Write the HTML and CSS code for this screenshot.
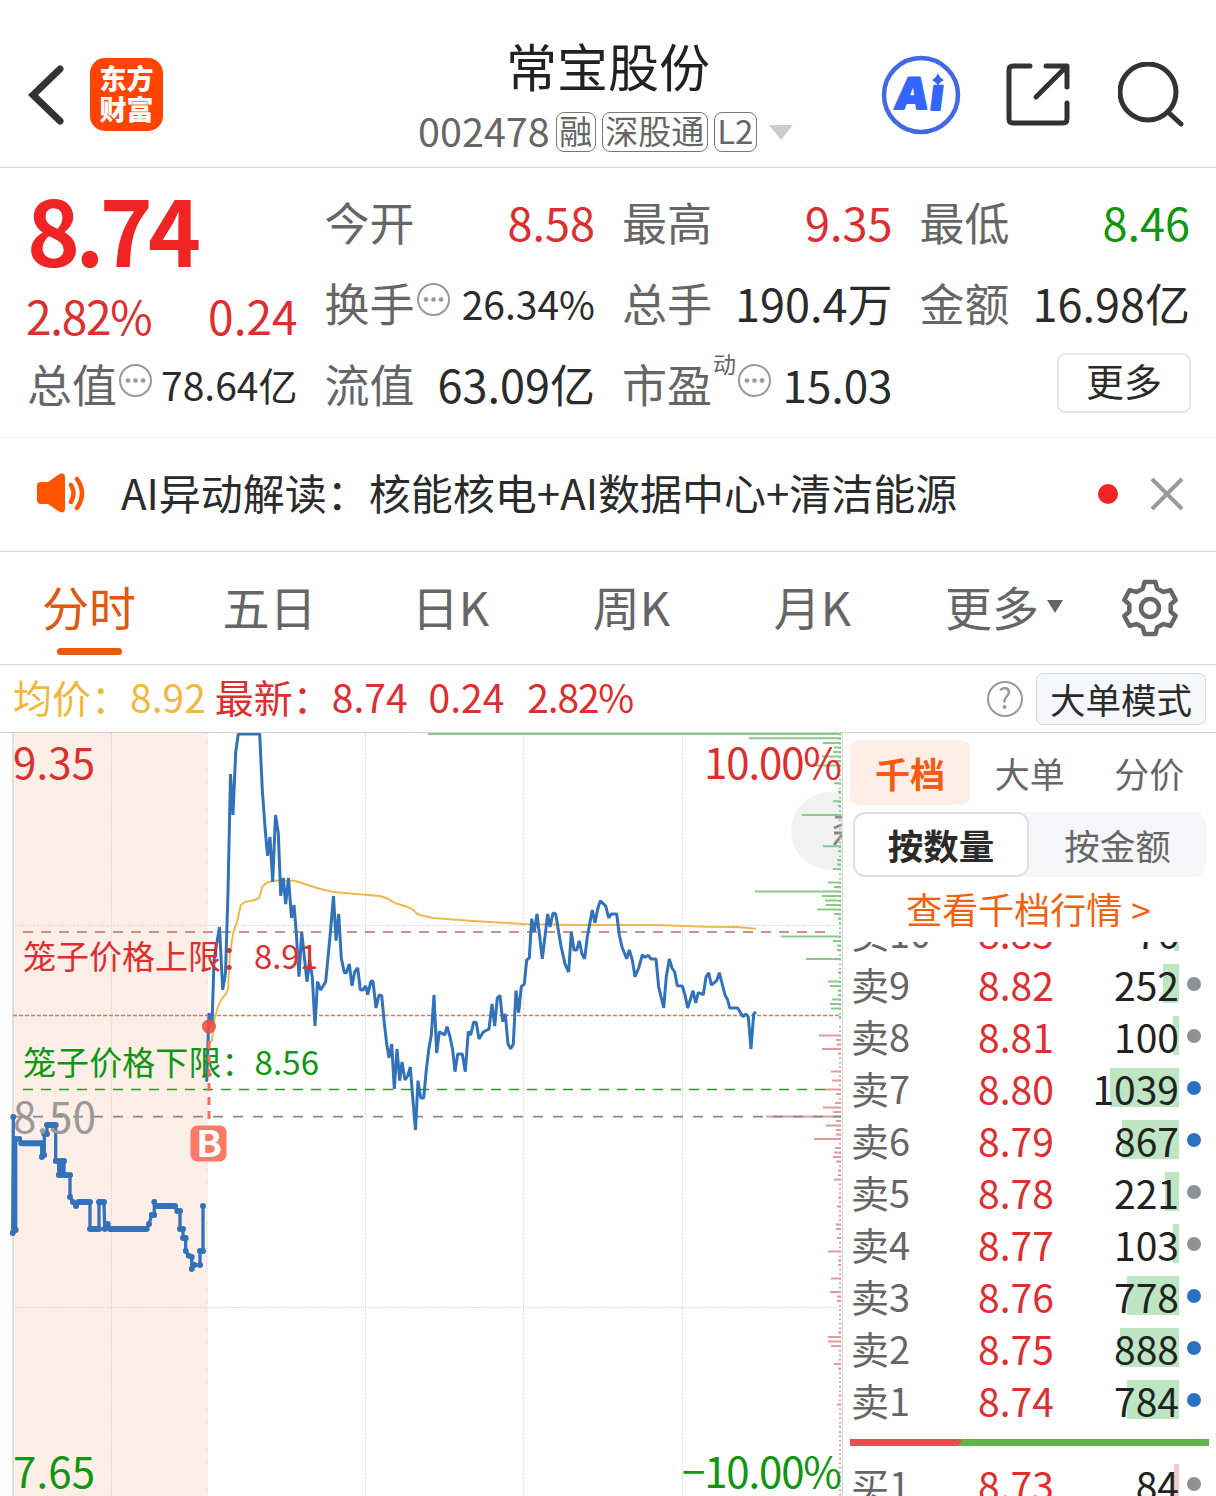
FILE: index.html
```html
<!DOCTYPE html>
<html lang="zh-CN">
<head>
  <meta charset="utf-8">
  <title>常宝股份 002478</title>
  <link rel="stylesheet" href="styles.css">
</head>
<body>
  <header class="header">
    <div class="header-left">
      <svg class="back" width="36" height="60" viewBox="0 0 36 60"><path d="M32 4 L5 30 L32 56"/></svg>
      <div class="logo"><span>东方</span><span>财富</span></div>
    </div>
    <div class="header-title">
      <h1>常宝股份</h1>
      <div class="code-row">
        <span class="code">002478</span>
        <span class="tag">融</span>
        <span class="tag">深股通</span>
        <span class="tag">L2</span>
        <svg class="drop" width="24" height="15" viewBox="0 0 24 15"><path d="M0 0H24L12 15Z"/></svg>
      </div>
    </div>
    <div class="header-right">
      <svg class="ai" width="80" height="80" viewBox="0 0 80 80">
        <circle cx="40" cy="40" r="37"/>
        <g transform="skewX(-7)">
          <text x="20" y="54" textLength="32" lengthAdjust="spacingAndGlyphs">A</text>
          <text x="54" y="55">ı</text>
        </g>
        <path d="M57 18 Q58.500 23 63 25 Q58.500 27 57 31 Q55 27 51 25 Q55 23 57 18Z"/>
      </svg>
      <svg class="line-icon share" width="64" height="64" viewBox="0 0 64 64">
        <path d="M24 3H7Q3 3 3 7V56Q3 60 7 60H57Q61 60 61 56V40"/>
        <path d="M40 3H61V24M60 4L30 34"/>
      </svg>
      <svg class="line-icon" width="66" height="66" viewBox="0 0 66 66">
        <circle cx="30" cy="30" r="28"/>
        <path d="M50 50L63 62"/>
      </svg>
    </div>
  </header>

  <section class="quote">
    <div class="price-block">
      <div class="price">8.74</div>
      <div class="change"><span class="pct">2.82%</span><span>0.24</span></div>
    </div>
    <div class="cell"><label>今开</label><b class="red">8.58</b></div>
    <div class="cell"><label>最高</label><b class="red">9.35</b></div>
    <div class="cell"><label>最低</label><b class="green">8.46</b></div>
    <div class="cell"><label>换手</label><i class="dots"></i><b class="small">26.34%</b></div>
    <div class="cell"><label>总手</label><b>190.4万</b></div>
    <div class="cell"><label>金额</label><b>16.98亿</b></div>
    <div class="cell"><label>总值</label><i class="dots"></i><b class="small">78.64亿</b></div>
    <div class="cell"><label>流值</label><b>63.09亿</b></div>
    <div class="cell"><label>市盈</label><sup>动</sup><i class="dots"></i><b class="pe">15.03</b></div>
    <div class="cell"><button class="more">更多</button></div>
  </section>

  <section class="notice">
    <svg class="speaker" width="50" height="42" viewBox="0 0 50 42">
      <path class="fill" d="M4 9H11L21 2Q28 -2 28 5V35Q28 42 21 38L11 31H4Q0 31 0 27V13Q0 9 4 9Z"/>
      <path d="M34 12Q39 20 34 29M40 6Q50 20 40 35"/>
    </svg>
    <p>AI异动解读：核能核电+AI数据中心+清洁能源</p>
    <i class="red-dot"></i>
    <svg class="close" width="34" height="34" viewBox="0 0 34 34"><path d="M2 2L32 32M32 2L2 32"/></svg>
  </section>

  <nav class="tabs">
    <a class="active">分时</a>
    <a>五日</a>
    <a>日K</a>
    <a>周K</a>
    <a>月K</a>
    <a class="tab-more">更多<i></i></a>
    <svg class="gear" width="60" height="60" viewBox="-30 -30 60 60">
      <path d="M-5.500 -26H5.500L7.200 -19.300L13.500 -16.100L20.500 -17.800L25.700 -8L20.700 -3.600V3.600L25.700 8L20.500 17.800L13.500 16.100L7.200 19.300L5.500 26H-5.500L-7.200 19.300L-13.500 16.100L-20.500 17.800L-25.700 8L-20.700 3.600V-3.600L-25.700 -8L-20.500 -17.800L-13.500 -16.100L-7.200 -19.300Z"/>
      <circle r="9"/>
    </svg>
  </nav>

  <div class="info">
    <span class="avg">均价：8.92</span>
    <span class="red last">最新：8.74</span>
    <span class="red">0.24</span>
    <span class="red tight">2.82%</span>
    <i class="help">?</i>
    <button class="mode">大单模式</button>
  </div>

  <main class="main">
    <svg class="chart" width="843" height="763" viewBox="0 733 843 763">
      <defs>
        <marker id="dot" markerWidth="6" markerHeight="6" refX="3" refY="3" markerUnits="userSpaceOnUse"><circle cx="3" cy="3" r="3" fill="#3272ba"/></marker>
      </defs>
      <rect class="premarket" x="13" y="733" width="194" height="763"/>
      <circle class="float" cx="830" cy="831" r="39"/>
      <path class="float-lines" d="M835 817H842M834 828L842 824.500M834 833H842M834 845L842 835"/>
      <path class="grid" d="M111.500 733V1496M207 733V1496M365.500 733V1496M523.700 733V1496M682.500 733V1496M13 925.500H841M13 1307.500H841"/>
      <path class="edge" d="M13 733V1496M842.500 733V1496"/>

      <!-- volume by price -->
      <path class="vol-ticks up" d="M840 734V1022"/>
      <path class="vol-ticks down" d="M840 1026V1496"/>
      <path class="vol up" d="M841 734H428M841 738.300H749M841 743H823M841 747.500H834M841 752H833M841 756.500H822M841 761H833M841 765.500H812M841 783.300H834M841 792H838M841 801.300H833M841 806H838M841 815H802M841 846.300H823M841 851H838M841 860H837M841 864.500H837M841 869H833M841 882.500H828M841 887H834M841 891.500H755M841 896H822M841 900.500H825M841 905H826M841 909.500H817M841 914H834M841 918.500H838M841 923H839M841 936.500H781M841 941H833M841 945.500H837M841 950H837M841 959H806M841 972.500H838M841 981.500H828M841 986H830M841 990.500H838M841 995H838M841 999.500H832M841 1004H830M841 1008.500H831M841 1017H839"/>
      <path class="vol down" d="M841 1035.500H819M841 1040H836M841 1044.500H837M841 1049H822M841 1053.500H838M841 1071.500H831M841 1080.500H832M841 1089.500H825M841 1094H836M841 1103H835M841 1107.500H823M841 1112H833M841 1116.500H766M841 1121H836M841 1125.500H826M841 1130H836M841 1134.500H836M841 1139H814M841 1148H835M841 1152.500H834M841 1157H833M841 1161.500H836M841 1170.500H838M841 1175H838M841 1179.500H834M841 1197.500H838M841 1206.500H837M841 1224.500H836M841 1229H836M841 1238H837M841 1251.500H828M841 1260.500H838M841 1265H838M841 1278.500H831M841 1292H830M841 1296.500H837M841 1301H837M841 1332.500H838M841 1337H828M841 1341.500H828M841 1346H831M841 1364H834M841 1368.500H838M841 1395.500H839M841 1404.500H837M841 1427H839M841 1432H839"/>

      <text class="red axis" x="13" y="779" textLength="82">9.35</text>
      <text class="red axis" x="704" y="779" textLength="138">10.00%</text>
      <text class="green axis" x="13" y="1488" textLength="82">7.65</text>
      <text class="green axis" x="682" y="1488" textLength="160">−10.00%</text>

      <path class="limit-up" d="M23 932H828"/>
      <path class="now" d="M13 1015.500H841"/>
      <path class="limit-down" d="M23 1089.500H828"/>
      <path class="close-line" d="M13 1116.700H841"/>

      <polyline class="avg-line" points="208,1046 211.7,1040.7 215,1016.7 218.3,1006 221.7,998.7 226,994 228,989 230,953 233.3,932.7 237.3,921 240.7,905 245,902 255,900 259.3,897.7 262.3,886.7 266.7,882.7 273.3,880.7 295,880.7 301.7,883 310,885.7 317,888 331.7,891.7 353,893.7 380,896 388,898.7 395,903 406.7,906.7 413.3,909.7 416.7,913.7 420,915 433,918 473,921 523,924 576.7,925 656.7,925 706.7,926.7 736.7,926.9 756,928.7"/>
      <polyline class="price-line" points="206.7,1081.7 209,1013 212,1026 214,960 219.5,927 222.7,990 225.5,973 228,892 230.5,774 233,815 235.7,752 238.3,734 259.7,734 262.3,790 265,827 267.5,855.7 270,837 272.7,882 275.5,815 278.3,833 280.7,895.7 283.3,878 285.7,904 288.5,878 291.5,918 294,905 296.3,933 299,976.7 301.7,932 307,981.7 309.7,960 312.3,977 315,1026 317.5,981.7 320.7,990 325.7,981.7 330,936.7 333.5,896 336,940.7 338.7,914 341.3,958 344.3,972.7 346.3,972.7 349.3,964 352,985.7 354.7,972 357.7,968 360.3,989.7 362.7,990 365.7,986 367.7,994.7 371,981 373,981.3 376,1008 379,995 381.7,995.7 384.3,1023 386.7,1044 389,1057.7 391.7,1044 394.3,1089 397,1049 399.7,1080.7 402,1062 405,1080 407.7,1076 410.3,1067 412.7,1097 415.5,1130 418,1080.7 420.7,1098 423.7,1098 426.3,1070 428.7,1050 431.3,1035 434,995 436.7,1053 439.3,1031.7 444.7,1035 447,1026.7 450,1036.7 452.7,1050 455,1071.7 457.7,1054 462.3,1054 465.3,1071.7 468.3,1031.7 470.7,1035 473.7,1022 476.3,1022.7 479,1039 483.3,1032 489,1029 492,1004 494.7,1026 497.3,998 500,995.7 502.7,1021.7 505.3,1014 508,1044 510.7,1048.7 513.3,1044 516,990.7 518.7,1012.7 521.3,986.7 524.3,984 526.7,960 529.3,958 531.7,918.7 534.3,931.7 537,914 542.3,958.7 547.7,914 550,927 553,913 555.7,914 561,946 565,964 568.7,972 571.3,932 574,950 576.7,950 579.3,941 582,954 584.7,958.7 587.3,936.7 592.3,910 595,922.7 597.7,909 600.3,900.7 605.7,906 608.7,918 611.3,914 616.7,914 619.3,935 622,947 626.7,958.7 629.3,950 632.3,960 635,976.7 638.7,968 642.3,955 645,957.3 648.3,955.3 651,959 656,959 658.7,987 663.7,1008 666.3,976.7 669.3,959 672,968 674.7,972 677.3,985.7 682.3,986 685,995 687.7,1008 693,990.7 695.7,1003 698.3,992.7 703.3,994.7 706,977 708.7,972.7 711.3,985 716.7,980.7 719.3,972.7 725,995 727.7,1000 729.7,1008 737.7,1008 743,1016.7 745.7,1014 748.3,1016.7 751,1049 753.7,1014 756,1012"/>
      <polyline class="pre-line" points="13.3,1117 12.7,1233 15.7,1230 15.7,1139 19.3,1139 21.3,1143.3 41.7,1143.3 41.7,1157 44.3,1155 44.3,1134 47,1134 47,1125 55.7,1125 55.7,1161 58.7,1161 58.7,1175 61.3,1175 61.3,1161 64,1161 64,1175 70,1175 70,1197 73,1202 76,1206 78.7,1202 90,1202 90,1229 99,1229 99,1202 104,1202 104.7,1229 107.7,1224 110,1229 146.7,1229 149,1224 151.7,1215 154.3,1215 154.3,1202 156.7,1206 175,1206 177.3,1211 180,1211 180,1229 183,1229 183,1238 185.7,1238 185.7,1251 188.7,1255.7 191.7,1257 191.7,1269 194.3,1265 200,1265 200,1251 203,1251 203,1206"/>
      <path class="pre-runs" d="M22 1143.300H41M48 1125H55M65 1175H68M79 1202H89M91 1229H98M99 1202H103M110 1229H146M157 1206H174"/>

      <text class="grey axis" x="13" y="1133" textLength="83">8.50</text>
      <text class="red limit" x="23" y="969" textLength="295">笼子价格上限：8.91</text>
      <text class="green limit" x="23" y="1075" textLength="296">笼子价格下限：8.56</text>

      <path class="buy-stem" d="M209 1041V1119"/>
      <circle class="buy-point" cx="209" cy="1026.500" r="7"/>
      <rect class="buy-flag" x="190.500" y="1125.500" width="36" height="36" rx="7"/>
      <text class="buy-text" x="196" y="1157" textLength="26" lengthAdjust="spacingAndGlyphs">B</text>
    </svg>

    <aside class="book">
      <div class="book-tabs"><a class="on">千档</a><a>大单</a><a>分价</a></div>
      <div class="seg"><a class="on">按数量</a><a>按金额</a></div>
      <a class="link">查看千档行情 <span>&gt;</span></a>
      <div class="sell">
        <div class="row"><span>卖10</span><b>8.83</b><em><i style="width:5px"></i>76</em></div>
        <div class="row"><span>卖9</span><b>8.82</b><em><i style="width:16px"></i>252</em><u></u></div>
        <div class="row"><span>卖8</span><b>8.81</b><em><i style="width:6px"></i>100</em><u></u></div>
        <div class="row"><span>卖7</span><b>8.80</b><em><i style="width:69px"></i>1039</em><u class="big"></u></div>
        <div class="row"><span>卖6</span><b>8.79</b><em><i style="width:57px"></i>867</em><u class="big"></u></div>
        <div class="row"><span>卖5</span><b>8.78</b><em><i style="width:14px"></i>221</em><u></u></div>
        <div class="row"><span>卖4</span><b>8.77</b><em><i style="width:6px"></i>103</em><u></u></div>
        <div class="row"><span>卖3</span><b>8.76</b><em><i style="width:52px"></i>778</em><u class="big"></u></div>
        <div class="row"><span>卖2</span><b>8.75</b><em><i style="width:59px"></i>888</em><u class="big"></u></div>
        <div class="row"><span>卖1</span><b>8.74</b><em><i style="width:52px"></i>784</em><u class="big"></u></div>
      </div>
      <div class="ratio"></div>
      <div class="row buy"><span>买1</span><b>8.73</b><em><i style="width:5px"></i>84</em><u></u></div>
    </aside>
  </main>
</body>
</html>
```
FILE: styles.css
```css
* { box-sizing: border-box; margin: 0; padding: 0; }
body { width: 1216px; height: 1496px; overflow: hidden; background: #fff; color: #2b2b2b; font-family: "Noto Sans CJK SC", sans-serif; }
b, i, em, u { font-weight: 400; font-style: normal; text-decoration: none; }
svg { display: block; flex: none; }
button { font-family: inherit; color: #2b2b2b; }
.red { color: #dc2f2f; fill: #dc2f2f; }
.green { color: #109610; fill: #109610; }
.grey { fill: #999; }

.header { height: 168px; display: grid; grid-template-columns: 1fr auto 1fr; border-bottom: 1px solid #d8d8d8; }
.header-left { display: flex; align-items: center; padding: 22px 0 0 28px; gap: 26px; }
.back path { fill: none; stroke: #333; stroke-width: 7; stroke-linecap: round; }
.logo { width: 73px; height: 73px; border-radius: 15px; background: #ff4500; color: #fff; font-size: 27px; font-weight: 900; line-height: 31px; text-align: center; padding-top: 4px; }
.logo span { display: block; }
.header-title { display: flex; flex-direction: column; align-items: center; padding-top: 34px; }
.header-title h1 { font-size: 51px; font-weight: 400; line-height: 62px; color: #222; }
.code-row { display: flex; align-items: center; height: 40px; margin-top: 16px; gap: 6px; color: #666; margin-right: 5px; }
.code { font-size: 39.5px; line-height: 40px; margin-top: -4px; }
.tag { font-size: 33px; line-height: 32px; height: 40px; padding: 1px 2.5px; border: 1px solid #777; border-radius: 8px; }
.drop { fill: #ccc; margin-left: 6px; }
.header-right { display: flex; align-items: center; justify-content: flex-end; padding: 22px 32px 0 0; }
.ai circle { fill: none; stroke: #4069e8; stroke-width: 4.500; }
.ai text { font: 800 44px "Open Sans", sans-serif; fill: #3366ff; stroke: #3366ff; stroke-width: 2; stroke-linejoin: round; }
.ai path { fill: #3366ff; }
.line-icon { fill: none; stroke: #333; stroke-width: 5; stroke-linecap: round; stroke-linejoin: round; }
.share { margin: 0 48px 0 45px; }

.quote { height: 270px; padding: 12px 26px 0 27px; display: grid; grid-template-columns: repeat(4, 1fr); grid-template-rows: repeat(3, 81px); column-gap: 27px; border-bottom: 1px solid #eee; }
.price-block { grid-row: span 2; color: #dc2f2f; }
.price { font-size: 90px; font-weight: 700; line-height: 97px; color: #f02424; letter-spacing: -4.800px; }
.change { display: flex; justify-content: space-between; font-size: 46px; line-height: 65px; margin-top: 6px; }
.pct { letter-spacing: -1.300px; margin-left: -1px; }
.cell { display: flex; align-items: center; white-space: nowrap; padding-top: 2px; }
.cell label { font-size: 45px; color: #666; }
.cell b { font-size: 45px; margin-left: auto; }
.cell b.small { font-size: 39px; }
.cell b.pe { font-size: 44px; }
.cell sup { font-size: 23px; line-height: 24px; color: #666; align-self: flex-start; margin: 7px 0 0 1px; }
.dots { width: 33px; height: 33px; border: 2.500px solid #999; border-radius: 50%; margin: -6px 0 0 2px; background: radial-gradient(circle, #999 2px, transparent 2.700px) center / 7.500px 8px; background-clip: content-box; padding: 10px 3px; }
.more { width: 134px; height: 60px; margin: -2px -1px 0 auto; background: #fff; border: 2px solid #e8e8e8; border-radius: 8px; font-size: 38px; line-height: 48px; padding-bottom: 5px; }

.notice { height: 114px; display: flex; align-items: center; padding: 0 32px 2px 37px; border-bottom: 1px solid #d8d8d8; }
.speaker { fill: none; stroke: #ff5500; stroke-width: 4.500; stroke-linecap: round; }
.speaker .fill { fill: #ff5500; stroke: none; }
.notice p { font-size: 42px; margin: -5px 0 0 34px; white-space: nowrap; }
.red-dot { width: 20px; height: 20px; border-radius: 50%; background: #f22424; margin: 0 32px 0 auto; }
.close { stroke: #999; stroke-width: 4; }

.tabs { height: 113px; display: flex; align-items: flex-start; padding: 20px 0 0 42px; border-bottom: 1px solid #d8d8d8; font-size: 47px; line-height: 68px; color: #666; }
.tabs a { width: 181px; text-align: center; margin-left: 0; }
.tabs a.active { width: 94px; color: #e0590f; margin-right: 43px; }
.tabs a.active::after { content: ""; display: block; width: 65px; height: 7px; margin: 8px auto 0; border-radius: 4px; background: #e8590c; }
.tabs a.tab-more { width: 134px; margin-left: 42px; display: flex; align-items: center; }
.tab-more i { border: 8px solid transparent; border-top: 13px solid #666; border-bottom: 0; margin-left: 8px; }
.gear { fill: none; stroke: #666; stroke-width: 4.500; stroke-linejoin: round; margin: 6px 0 0 41px; }

.info { height: 68px; display: flex; align-items: center; padding: 0 10px 0 13px; border-bottom: 1px solid #d0d0d0; font-size: 39px; white-space: nowrap; }
.info span { margin: -5px 21px 0 0; }
.info .avg { color: #f0b840; margin-right: 9px; }
.info .tight { letter-spacing: -1.200px; margin-left: 2px; }
.help { width: 36px; height: 36px; margin: 0 13px 0 auto; border: 2.500px solid #999; border-radius: 50%; color: #999; font-size: 28px; line-height: 29px; text-align: center; }
.mode { width: 170px; height: 52px; background: #f6f7fa; border: 1px solid #d9d9d9; border-radius: 7px; font-size: 35.500px; line-height: 44px; }

.main { display: flex; height: 763px; }
.premarket { fill: #fdeee7; }
.float { fill: #f2f2f2; }
.float-lines { stroke: #888; stroke-width: 3; }
.grid { stroke: #ccc; stroke-width: 1; stroke-dasharray: 1 1.500; fill: none; }
.edge { stroke: #d8d8d8; stroke-width: 1.500; }
.vol { stroke-width: 2; }
.vol-ticks { stroke-width: 2; stroke-dasharray: 1.500 3; }
.up { stroke: #8cc88c; }
.down { stroke: #e29a9a; }
.axis { font-size: 42px; }
.limit { font-size: 33px; }
.limit-up { stroke: #cf8f8f; stroke-width: 2; stroke-dasharray: 10 8; }
.now { stroke: #d0804f; stroke-width: 1.300; stroke-dasharray: 4 2; }
.limit-down { stroke: #2a9a2a; stroke-width: 1.300; stroke-dasharray: 10 8; }
.close-line { stroke: #888; stroke-width: 1.700; stroke-dasharray: 10 10; }
.avg-line { fill: none; stroke: #efb84c; stroke-width: 2; }
.price-line { fill: none; stroke: #3272ba; stroke-width: 3; stroke-linejoin: bevel; }
.pre-line { fill: none; stroke: #3272ba; stroke-width: 3.300; stroke-linejoin: round; marker-start: url(#dot); marker-mid: url(#dot); marker-end: url(#dot); }
.pre-runs { stroke: #3272ba; stroke-width: 6; }
.buy-stem { stroke: #f0705f; stroke-width: 3; stroke-dasharray: 8 6; }
.buy-point { fill: #f2503f; opacity: .9; }
.buy-flag { fill: #fa7a68; }
.buy-text { font-size: 36px; font-weight: 700; fill: #fff; }

.book { width: 373px; padding: 7px 7px 0; overflow: hidden; color: #666; }
.book-tabs { display: flex; height: 65px; font-size: 35px; line-height: 66px; text-align: center; }
.book-tabs a { width: 119.500px; }
.book-tabs .on { width: 120px; border-radius: 9px; background: #feeee6; color: #f85a0f; font-weight: 700; }
.seg { display: flex; margin: 7px 3px 0; height: 65px; border-radius: 12px; background: #f6f6f9; font-size: 35.500px; line-height: 65px; text-align: center; }
.seg a { flex: 1; }
.seg .on { flex: none; width: 176px; border: 2px solid #e0e0e0; border-radius: 12px; background: #fff; color: #2b2b2b; font-weight: 700; line-height: 61px; }
.link { display: block; height: 65px; line-height: 63px; font-size: 36px; color: #f0620f; text-align: center; padding-right: 2px; }
.link span { font-size: 35px; margin-left: 1px; }
.sell { height: 484px; display: flex; flex-direction: column; justify-content: flex-end; overflow: hidden; }
.row { flex: none; height: 52px; line-height: 52px; display: flex; align-items: center; font-size: 38px; white-space: nowrap; padding-left: 1px; }
.row span { width: 127px; }
.row b { width: 76px; font-size: 39px; color: #dc2f2f; }
.row em { position: relative; width: 125px; font-size: 39px; color: #222; text-align: right; }
.row em i { position: absolute; z-index: -1; right: 0; top: 6px; height: 39px; background: #bfe6c2; }
.row u { width: 14px; height: 14px; margin-left: 8px; border-radius: 50%; background: #8f8f96; }
.row u.big { background: #2b72c4; }
.ratio { height: 7px; margin: 13px 0 12px; background: linear-gradient(125deg, #e25050 92px, #5db548 93px); width: 359px; }
.buy em i { background: #f8c9c9; }
```
